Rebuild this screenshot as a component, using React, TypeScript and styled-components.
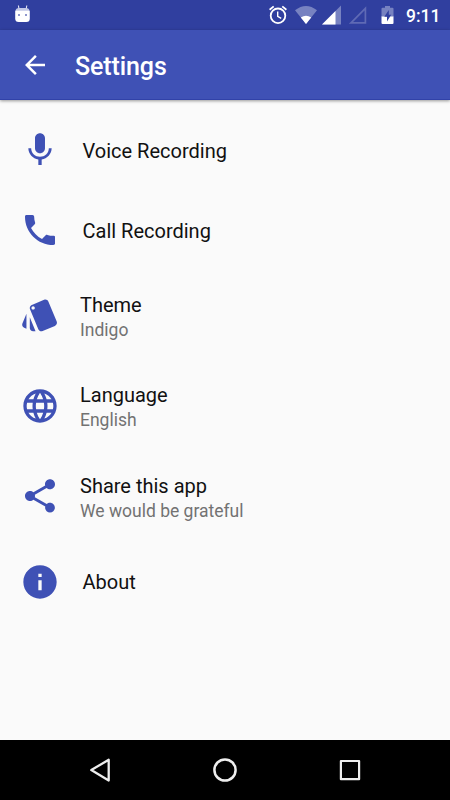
import React from 'react';
import styled, { createGlobalStyle } from 'styled-components';

const GlobalStyle = createGlobalStyle`
  * { box-sizing: border-box; }
  body { margin: 0; background: #fafafa; font-family: Roboto, sans-serif; }
`;

const Screen = styled.div`
  display: flex;
  flex-direction: column;
  width: 450px;
  height: 800px;
  background: #fafafa;
  overflow: hidden;
`;

const StatusBar = styled.header`
  display: flex;
  align-items: center;
  justify-content: space-between;
  flex: 0 0 30px;
  padding: 0 10px 0 14px;
  background: #303f9f;
`;

const StatusIcons = styled.div`
  display: flex;
  align-items: center;
  height: 30px;
`;

const Glyph = styled.svg<{ $gap?: number }>`
  display: block;
  flex: none;
  margin-right: ${(p) => p.$gap ?? 0}px;
`;

const Clock = styled.span`
  width: 34px;
  font-size: 17.5px;
  font-weight: 500;
  line-height: 30px;
  padding-top: 2px;
  color: #fff;
  white-space: nowrap;
`;

const Toolbar = styled.div`
  display: flex;
  align-items: center;
  flex: 0 0 70px;
  padding-left: 20px;
  background: #3f51b5;
  border-bottom: 1px solid #3142a8;
  box-shadow: 0 1px 3px rgba(0, 0, 0, 0.4);
`;

const BackButton = styled.button`
  display: flex;
  width: 30px;
  height: 30px;
  margin-right: 25px;
  padding: 0;
  border: 0;
  background: none;
`;

const Title = styled.h1`
  margin: 5px 0 0;
  font-size: 25px;
  font-weight: 500;
  line-height: 30px;
  letter-spacing: -0.1px;
  color: #fff;
`;

const List = styled.main`
  display: flex;
  flex-direction: column;
  flex: 1;
  padding-top: 10px;
`;

const Row = styled.div<{ $tall: boolean }>`
  display: flex;
  align-items: center;
  flex: none;
  height: ${(p) => (p.$tall ? 90.6 : 80)}px;
  padding-left: 20px;
`;

const RowIcon = styled.svg`
  display: block;
  flex: none;
  width: 40px;
  height: 40px;
  fill: #3f51b5;
`;

const RowText = styled.div<{ $tall: boolean }>`
  display: flex;
  flex-direction: column;
  margin-left: ${(p) => (p.$tall ? 20 : 22.5)}px;
  padding-top: ${(p) => (p.$tall ? 3 : 1)}px;
`;

const Label = styled.span`
  font-size: 20px;
  line-height: 26px;
  color: #111;
`;

const Summary = styled.span`
  font-size: 17.5px;
  line-height: 24px;
  color: #727272;
`;

const NavBar = styled.nav`
  display: flex;
  align-items: center;
  justify-content: center;
  gap: 95px;
  flex: 0 0 60px;
  background: #000;
`;

const items = [
  {
    label: 'Voice Recording',
    path: 'M12 14c1.66 0 2.99-1.34 2.99-3L15 5c0-1.66-1.34-3-3-3S9 3.34 9 5v6c0 1.66 1.34 3 3 3zm5.3-3c0 3-2.54 5.1-5.3 5.1S6.7 14 6.7 11H5c0 3.41 2.72 6.23 6 6.72V21h2v-3.28c3.28-.48 6-3.3 6-6.72h-1.7z',
  },
  {
    label: 'Call Recording',
    path: 'M6.62 10.79c1.44 2.83 3.76 5.14 6.59 6.59l2.2-2.2c.27-.27.67-.36 1.02-.24 1.12.37 2.33.57 3.57.57.55 0 1 .15 1 .6V20.3c0 .45-.45.7-1 .7C10.61 21 3 13.39 3 4c0-.55.25-1 .7-1h3.8c.55 0 1 .45 1 1 0 1.25.2 2.45.57 3.57.11.35.03.74-.25 1.02z',
  },
  {
    label: 'Theme',
    summary: 'Indigo',
    path: 'M2.53 19.65l1.34.56v-9.03l-2.43 5.86c-.41 1.02.08 2.19 1.09 2.61zm19.5-3.7L17.07 3.98c-.31-.75-1.04-1.21-1.81-1.23-.26 0-.53.04-.79.15L7.1 5.95c-.75.31-1.21 1.03-1.23 1.8-.01.27.04.54.15.8l4.96 11.97c.31.76 1.05 1.22 1.83 1.23.26 0 .52-.05.77-.15l7.36-3.05c1.02-.42 1.51-1.59 1.09-2.6zM7.88 8.75c-.55 0-1-.45-1-1s.45-1 1-1 1 .45 1 1-.45 1-1 1zm-2 11c0 1.1.9 2 2 2h1.45l-3.45-8.34v6.34z',
  },
  {
    label: 'Language',
    summary: 'English',
    path: 'M11.99 2C6.47 2 2 6.48 2 12s4.47 10 9.99 10C17.52 22 22 17.52 22 12S17.52 2 11.99 2zm6.93 6h-2.95c-.32-1.25-.78-2.45-1.38-3.56 1.84.63 3.37 1.91 4.33 3.56zM12 4.04c.83 1.2 1.48 2.53 1.91 3.96h-3.82c.43-1.43 1.08-2.76 1.91-3.96zM4.26 14C4.1 13.36 4 12.69 4 12s.1-1.36.26-2h3.38c-.08.66-.14 1.32-.14 2s.06 1.34.14 2H4.26zm.82 2h2.95c.32 1.25.78 2.45 1.38 3.56-1.84-.63-3.37-1.9-4.33-3.56zm2.95-8H5.08c.96-1.66 2.49-2.93 4.33-3.56C8.81 5.55 8.35 6.75 8.03 8zM12 19.96c-.83-1.2-1.48-2.53-1.91-3.96h3.82c-.43 1.43-1.08 2.76-1.91 3.96zM14.34 14H9.66c-.09-.66-.16-1.32-.16-2s.07-1.35.16-2h4.68c.09.65.16 1.32.16 2s-.07 1.34-.16 2zm.25 5.56c.6-1.11 1.06-2.31 1.38-3.56h2.95c-.96 1.65-2.49 2.93-4.33 3.56zM16.36 14c.08-.66.14-1.32.14-2s-.06-1.34-.14-2h3.38c.16.64.26 1.31.26 2s-.1 1.36-.26 2h-3.38z',
  },
  {
    label: 'Share this app',
    summary: 'We would be grateful',
    path: 'M18 16.08c-.76 0-1.44.3-1.96.77L8.91 12.7c.05-.23.09-.46.09-.7s-.04-.47-.09-.7l7.05-4.11c.54.5 1.25.81 2.04.81 1.66 0 3-1.34 3-3s-1.34-3-3-3-3 1.34-3 3c0 .24.04.47.09.7L8.04 9.81C7.5 9.31 6.79 9 6 9c-1.66 0-3 1.34-3 3s1.34 3 3 3c.79 0 1.5-.31 2.04-.81l7.12 4.16c-.05.21-.08.43-.08.65 0 1.61 1.31 2.92 2.92 2.92s2.92-1.31 2.92-2.92-1.31-2.92-2.92-2.92z',
  },
  {
    label: 'About',
    path: 'M12 2C6.48 2 2 6.48 2 12s4.48 10 10 10 10-4.48 10-10S17.52 2 12 2zm1 15h-2v-6h2v6zm0-8h-2V7h2v2z',
  },
];

export default function App() {
  return (
    <>
      <GlobalStyle />
      <Screen>
        <StatusBar>
          <Glyph width="18" height="20" viewBox="0 0 18 20">
            <path d="M5 4 4.400 .5M12.200 4l.6-3.500" stroke="#e4e6f4" strokeWidth="1.100" />
            <path d="M1.500 6q.2-3 3.500-3h7q3.300 0 3.500 3z" fill="#c3c8e6" />
            <path fill="#fff" d="M1.200 5.800h14.600v7.700q0 3.500-3.500 3.500H4.700q-3.500 0-3.500-3.500z" />
            <circle cx="5" cy="10" r="1" fill="#6a75bd" />
            <circle cx="12" cy="10" r="1" fill="#6a75bd" />
          </Glyph>
          <StatusIcons>
            <Glyph $gap={7} width="20" height="20" viewBox="0 0 20 20" fill="none" stroke="#fff">
              <circle cx="10" cy="10.800" r="7.300" strokeWidth="1.800" />
              <path d="M1.600 4.800 5.700 1.400M18.400 4.800 14.300 1.400" strokeWidth="1.800" />
              <path d="M9.700 6.500v4.800l3.500 2" strokeWidth="1.400" />
            </Glyph>
            <Glyph $gap={5} width="22" height="20" viewBox="0 0 22 20">
              <path d="M0 5.300Q11-3.200 22 5.300L11 19z" fill="#7782c1" />
              <path d="M5.800 12.400Q11 9.200 16.200 12.400L11 19z" fill="#fff" />
            </Glyph>
            <Glyph $gap={8} width="19" height="20" viewBox="0 0 19 20">
              <path d="M0 19.500 19 .5v19z" fill="#7782c1" />
              <path d="M0 19.500 13.500 6v13.500z" fill="#fff" />
            </Glyph>
            <Glyph $gap={14} width="18" height="20" viewBox="0 0 18 20">
              <path d="M2 17.800 16.400 3.400v14.400z" fill="none" stroke="#5f6ab5" strokeWidth="1.700" />
            </Glyph>
            <Glyph $gap={12} width="13" height="20" viewBox="0 0 13 20">
              <path d="M.5 3.700q0-1 1-1H4V1h5v1.700h2.500q1 0 1 1V12H.500z" fill="#7782c1" />
              <path d="M.5 11.500h12V18q0 1-1 1h-10q-1 0-1-1z" fill="#fff" />
              <path d="M7.800 5 3.300 11.700H6v4.800l4.200-6.700H7.800z" fill="#303f9f" />
            </Glyph>
            <Clock>9:11</Clock>
          </StatusIcons>
        </StatusBar>
        <Toolbar>
          <BackButton aria-label="Back">
            <Glyph width="30" height="30" viewBox="0 0 24 24" fill="#fff">
              <path d="M20 11H7.830l5.590-5.590L12 4l-8 8 8 8 1.410-1.410L7.830 13H20v-2z" />
            </Glyph>
          </BackButton>
          <Title>Settings</Title>
        </Toolbar>
        <List>
          {items.map(({ label, summary, path }) => (
            <Row key={label} $tall={!!summary}>
              <RowIcon viewBox="0 0 24 24">
                <path d={path} />
              </RowIcon>
              <RowText $tall={!!summary}>
                <Label>{label}</Label>
                {summary && <Summary>{summary}</Summary>}
              </RowText>
            </Row>
          ))}
        </List>
        <NavBar>
          <Glyph width="30" height="30" viewBox="0 0 30 30" fill="none" stroke="#eee" strokeWidth="2.300" strokeLinejoin="round">
            <path d="M23.700 4.800v20.700L6.300 15.100z" />
          </Glyph>
          <Glyph width="30" height="30" viewBox="0 0 30 30" fill="none" stroke="#eee" strokeWidth="2.500">
            <circle cx="15" cy="15" r="10.600" />
          </Glyph>
          <Glyph width="30" height="30" viewBox="0 0 30 30" fill="none" stroke="#eee" strokeWidth="2.200" strokeLinejoin="round">
            <path d="M5.900 6h18.200v18.200H5.900z" />
          </Glyph>
        </NavBar>
      </Screen>
    </>
  );
}
